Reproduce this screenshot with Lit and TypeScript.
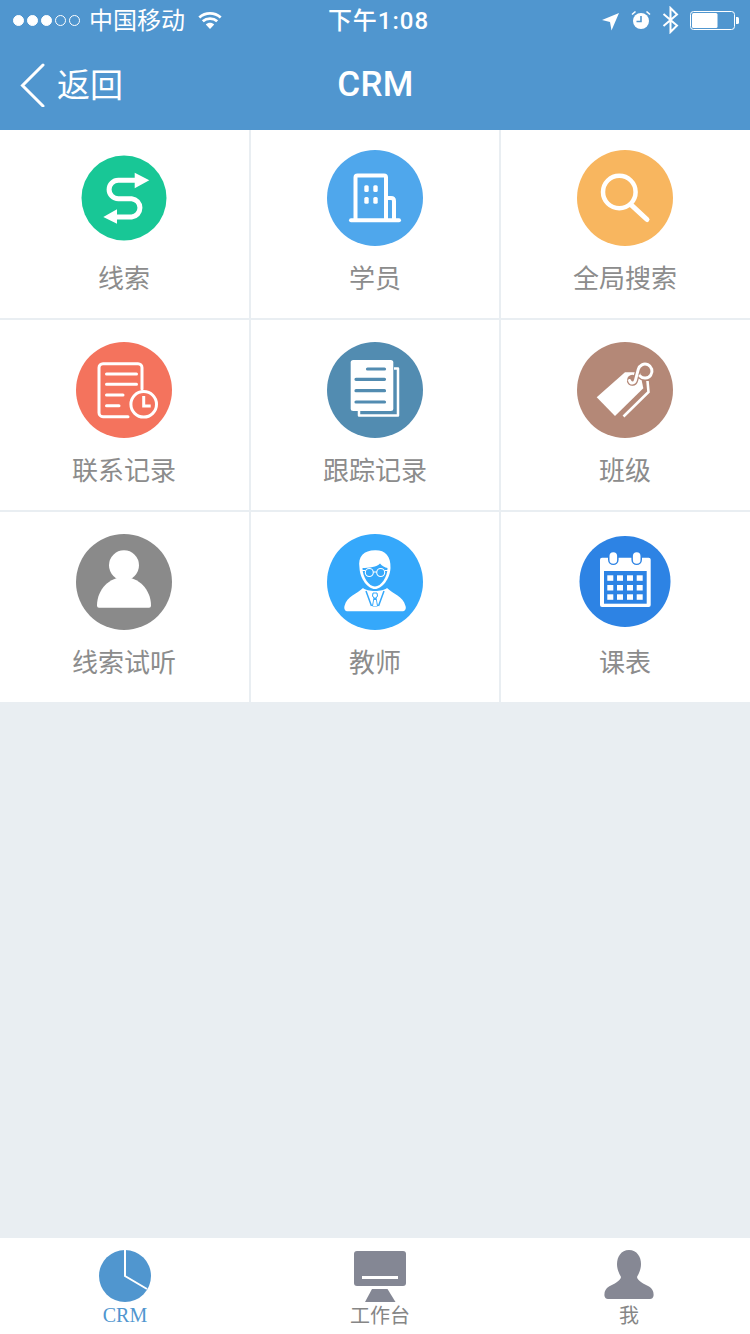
import { LitElement, html, svg, css } from 'lit';
import { customElement } from 'lit/decorators.js';

const CAL_COLS = [30.3, 40, 50, 59.7];
const CAL_ROWS = [41.3, 51, 60.3];

/* Each icon is drawn on the 96x96 box of its coloured disc. */
const ICONS = {
  leads: html`<svg viewBox="0 0 96 96"><circle cx="48" cy="48" r="42.5" fill="#18c796" />
    <path d="M59 30.3H42.3a9.2 9.2 0 0 0 0 18.4h13.4a9.2 9.2 0 0 1 0 18.3H40.7" fill="none" stroke="#fff" stroke-width="5" />
    <path d="M58.7 22.7 73.3 30.3 58.7 38.3zM41 59.3 27.3 67 41 73.7z" fill="#fff" /></svg>`,
  students: html`<svg viewBox="0 0 96 96"><circle cx="48" cy="48" r="48" fill="#4fa7ec" />
    <path d="M28.5 70V27.5q0-2 2-2H57q2 0 2 2V70M59 48h5q3 0 3 3v19" fill="none" stroke="#fff" stroke-width="4" />
    <path d="M24 70.3H72" stroke="#fff" stroke-width="4" stroke-linecap="round" />
    <g fill="#fff"><rect x="37.3" y="35.3" width="4.4" height="6.8" rx="1.5" /><rect x="46.3" y="35.3" width="4.4" height="6.8" rx="1.5" />
      <rect x="37.3" y="47" width="4.4" height="6.8" rx="1.5" /><rect x="46.3" y="47" width="4.4" height="6.8" rx="1.5" /></g></svg>`,
  search: html`<svg viewBox="0 0 96 96"><circle cx="48" cy="48" r="48" fill="#f8b65f" />
    <circle cx="42.3" cy="42" r="16.3" fill="none" stroke="#fff" stroke-width="4.5" />
    <path d="M54.7 55.3 70 69.5" stroke="#fff" stroke-width="5" stroke-linecap="round" /></svg>`,
  contacts: html`<svg viewBox="0 0 96 96"><circle cx="48" cy="48" r="48" fill="#f4735d" />
    <g fill="none" stroke="#fff" stroke-width="3" stroke-linecap="round">
      <path d="M52 74.7H27a4 4 0 0 1-4-4V25.7a4 4 0 0 1 4-4H62a4 4 0 0 1 4 4V47" />
      <path d="M30.5 32H60.5M30.5 42.3H60.5M30.5 53H47M30.5 63.7H43" />
      <circle cx="67.7" cy="62.3" r="12.8" />
      <path d="M67.7 54V64H74.7" stroke-linecap="butt" /></g></svg>`,
  follow: html`<svg viewBox="0 0 96 96"><circle cx="48" cy="48" r="48" fill="#528cb1" />
    <path d="M67 26.5H71V73.5H32V69" fill="none" stroke="#fff" stroke-width="2.5" stroke-linejoin="round" />
    <rect x="23.7" y="18" width="42.6" height="51" rx="2.5" fill="#fff" />
    <path d="M40.5 27H57.5M29 37.3H57.5M29 48.7H57.5M29 60H57.5" stroke="#528cb1" stroke-width="3.2" stroke-linecap="round" /></svg>`,
  classes: html`<svg viewBox="0 0 96 96"><circle cx="48" cy="48" r="48" fill="#b48877" />
    <path d="M19.7 55.3 48 30.3 63 30.3 66.3 46.3 38 74z" fill="#fff" />
    <path d="M46.5 74.5 71.5 50 70.5 39" fill="none" stroke="#fff" stroke-width="2.6" />
    <circle cx="55.3" cy="38" r="5.2" fill="#b48877" />
    <path d="M52.5 38.5c1 3.5 5 3.5 6-.5l2.7-10.500a7 7 0 1 1 1.800 6.500" fill="none" stroke="#b48877" stroke-width="5.500" />
    <path d="M52.5 38.5c1 3.5 5 3.5 6-.5l2.7-10.500a7 7 0 1 1 1.800 6.500" fill="none" stroke="#fff" stroke-width="3" stroke-linecap="round" /></svg>`,
  trials: html`<svg viewBox="0 0 96 96"><circle cx="48" cy="48" r="48" fill="#8a8a8a" />
    <circle cx="48" cy="31.3" r="15" fill="#fff" />
    <path d="M23 73.7H73a2 2 0 0 0 2-2C75 55 62 43 48 43S21 55 21 71.7a2 2 0 0 0 2 2z" fill="#fff" /></svg>`,
  teachers: html`<svg viewBox="0 0 96 96"><circle cx="48" cy="48" r="48" fill="#35a8fb" />
    <path d="M36 54C30 60 20 62 17.5 72 16.8 75 18 77.3 21 77.3H75C78 77.3 79.5 75 78.5 72 76 62 66 60 60 54 56 58 40 58 36 54z" fill="#fff" />
    <path d="M32.5 34C30.5 22 37 16.5 48 16.3 58 16 64 22 63.5 34 63 45 55 55 48 55 41 55 33 45 32.5 34z" fill="#fff" />
    <path d="M35.5 34C42 34 50 33 53 29.5 55 32 58 33.5 60.5 34 60.5 43 54 52.5 48 52.5 42 52.5 35.5 43 35.5 34z" fill="#35a8fb" />
    <g fill="none" stroke="#fff" stroke-width="1.1"><circle cx="42.3" cy="38.5" r="4" /><circle cx="53.7" cy="38.5" r="4" /><path d="M46.3 38H49.7M33 36.5H38.3M57.7 36.5H63" /></g>
    <path d="M39 57 44.5 72M57 57 51.5 72" stroke="#35a8fb" stroke-width="1.5" />
    <path d="M46 59H50L50.5 62 49 64 50.5 72H45.500L47 64 45.500 62z" fill="#35a8fb" stroke="#35a8fb" />
    <path d="M46.5 59.5H49.5L50 62 48 64 46 62zM47 66H49L50 72H46z" fill="#fff" /></svg>`,
  schedule: html`<svg viewBox="0 0 96 96"><circle cx="48" cy="47.5" r="45.5" fill="#2d83e4" />
    <rect x="23" y="23.7" width="50.7" height="49.3" rx="2" fill="#fff" />
    <rect x="27" y="37" width="42.7" height="32.7" fill="#2d83e4" />
    <rect x="31" y="17" width="10.6" height="14" rx="5.3" fill="#2d83e4" />
    <rect x="54.4" y="17" width="10.6" height="14" rx="5.3" fill="#2d83e4" />
    <g fill="#fff"><rect x="32.5" y="18.3" width="7.6" height="11.4" rx="3.8" /><rect x="55.9" y="18.3" width="7.6" height="11.4" rx="3.8" />
      ${CAL_ROWS.map((y) => CAL_COLS.map((x) => svg`<rect x=${x} y=${y} width="6" height="5.5" />`))}</g></svg>`,
};

const ITEMS = [
  { label: '线索', icon: ICONS.leads },
  { label: '学员', icon: ICONS.students },
  { label: '全局搜索', icon: ICONS.search },
  { label: '联系记录', icon: ICONS.contacts },
  { label: '跟踪记录', icon: ICONS.follow },
  { label: '班级', icon: ICONS.classes },
  { label: '线索试听', icon: ICONS.trials },
  { label: '教师', icon: ICONS.teachers },
  { label: '课表', icon: ICONS.schedule },
];

@customElement('app-root')
export class AppRoot extends LitElement {
  static styles = css`
    :host {
      display: flex;
      flex-direction: column;
      height: 1334px;
      background: #e9eef2;
      font-family: 'Noto Sans CJK SC', 'Liberation Sans', sans-serif;
    }

    .top {
      background: #5096cf;
      color: #fff;
      height: 130px;
      flex: none;
    }

    .status {
      display: grid;
      grid-template-columns: 1fr auto 1fr;
      align-items: center;
      height: 40px;
      padding: 0 10px 0 13px;
      font-size: 24px;
    }

    .status-left,
    .status-right {
      display: flex;
      align-items: center;
    }

    .status-right {
      justify-content: flex-end;
    }

    .dots {
      display: flex;
      gap: 3px;
      margin-right: 9px;
    }

    .dot {
      box-sizing: border-box;
      width: 11px;
      height: 11px;
      border-radius: 50%;
      border: 1px solid #fff;
    }

    .dot.on {
      background: #fff;
    }

    .carrier {
      margin-bottom: 4px;
    }

    .wifi {
      width: 26px;
      height: 20px;
      margin: 2px 0 0 12px;
    }

    .time {
      font-family: Roboto, 'Noto Sans CJK SC', sans-serif;
      font-weight: 500;
      letter-spacing: 1px;
      padding-left: 4px;
      margin-bottom: 4px;
    }

    .nav-arrow {
      width: 19px;
      height: 19px;
      margin-top: 2px;
    }

    .alarm {
      width: 20px;
      height: 20px;
      margin-left: 11px;
    }

    .bt {
      width: 17px;
      height: 28px;
      margin-left: 11px;
    }

    .battery {
      width: 50px;
      height: 20px;
      margin: 2px 0 0 11px;
    }

    .nav {
      position: relative;
      display: flex;
      align-items: center;
      height: 90px;
      padding-left: 20px;
    }

    .chevron {
      width: 25px;
      height: 44px;
      margin-top: -1px;
    }

    .back {
      margin: 0 0 4px 12px;
      font-size: 33px;
      line-height: 1;
    }

    .title {
      position: absolute;
      left: 1px;
      right: 0;
      text-align: center;
      font-family: Roboto, sans-serif;
      font-weight: 500;
      font-size: 35px;
      letter-spacing: 0.4px;
      line-height: 1;
      margin-top: -2px;
    }

    .grid {
      display: grid;
      grid-template-columns: 249px 248px 249px;
      grid-template-rows: 188px 190px 190px;
      gap: 2px;
      flex: none;
    }

    .cell {
      display: flex;
      flex-direction: column;
      align-items: center;
      background: #fff;
      padding-top: 22px;
    }

    .cell:not(:nth-child(3n + 2)) {
      padding-right: 1px;
    }

    .cell.first-row {
      padding-top: 20px;
    }

    .cell svg {
      width: 96px;
      height: 96px;
      flex: none;
    }

    .label {
      margin-top: 13px;
      font-size: 26px;
      line-height: 36px;
      color: #8c8c8c;
    }

    .spacer {
      flex: 1;
    }

    .tabs {
      display: grid;
      grid-template-columns: 250px 260px 238px;
      height: 96px;
      flex: none;
      background: #fff;
    }

    .tab {
      display: flex;
      flex-direction: column;
      align-items: center;
      padding-top: 11px;
    }

    .tab svg {
      width: 56px;
      height: 54px;
      flex: none;
    }

    .tab-label {
      font-size: 20px;
      line-height: 24px;
      color: #868686;
    }

    .tab-label.active {
      color: #5096cf;
      font-family: 'Liberation Serif', serif;
    }
  `;

  render() {
    return html`
      <div class="top">
        <div class="status">
          <div class="status-left">
            <div class="dots">
              ${[1, 1, 1, 0, 0].map((on) => html`<span class="dot ${on ? 'on' : ''}"></span>`)}
            </div>
            <span class="carrier">中国移动</span>
            <svg class="wifi" viewBox="0 0 26 20">
              <path d="M13 18 8.8 13.5C11 11.3 15 11.3 17.2 13.5z" fill="#fff" />
              <path d="M5.8 10.3C9.8 6.7 16.2 6.7 20.2 10.3M2.3 6.5C8.5 1 17.5 1 23.7 6.5" fill="none" stroke="#fff" stroke-width="2.8" />
            </svg>
          </div>
          <div class="time">下午1:08</div>
          <div class="status-right">
            <svg class="nav-arrow" viewBox="0 0 19 19"><path d="M1 8 18 1 10.5 18.5 9 10z" fill="#fff" /></svg>
            <svg class="alarm" viewBox="0 0 20 20">
              <circle cx="10" cy="11" r="8" fill="#fff" />
              <path d="M10 6V11.5H5.5" fill="none" stroke="#5096cf" stroke-width="1.6" />
              <path d="M1 4.5 4.5 1.5M19 4.5 15.5 1.5" stroke="#fff" stroke-width="1.6" />
            </svg>
            <svg class="bt" viewBox="0 0 17 28">
              <path d="M1.5 8 15 19.5 8.5 26V2L15 8.5 1.5 20" fill="none" stroke="#fff" stroke-width="2" />
            </svg>
            <svg class="battery" viewBox="0 0 50 20">
              <rect x="0.5" y="0.5" width="44" height="18" rx="3" fill="none" stroke="#fff" />
              <rect x="2" y="2" width="25.5" height="15" rx="1.5" fill="#fff" />
              <path d="M46 6h1.5q1.5 0 1.5 1.5v4q0 1.5-1.5 1.5H46z" fill="#fff" />
            </svg>
          </div>
        </div>
        <div class="nav">
          <svg class="chevron" viewBox="0 0 25 44">
            <path d="M23 2 2.5 22.5 23 43" fill="none" stroke="#fff" stroke-width="3" stroke-linecap="round" />
          </svg>
          <span class="back">返回</span>
          <span class="title">CRM</span>
        </div>
      </div>

      <div class="grid">
        ${ITEMS.map(
          (item, i) => html`
            <div class="cell ${i < 3 ? 'first-row' : ''}">
              ${item.icon}
              <span class="label">${item.label}</span>
            </div>
          `
        )}
      </div>

      <div class="spacer"></div>

      <div class="tabs">
        <div class="tab">
          <svg viewBox="0 0 56 54">
            <circle cx="28" cy="27" r="26" fill="#5096cf" />
            <path d="M28 1V27L50 40" fill="none" stroke="#fff" stroke-width="2" />
          </svg>
          <span class="tab-label active">CRM</span>
        </div>
        <div class="tab">
          <svg viewBox="0 0 56 54">
            <rect x="2" y="2" width="52" height="35" rx="3" fill="#848794" />
            <rect x="10" y="27" width="36" height="3" fill="#fff" />
            <path d="M20 40H35.5L43.5 53H13z" fill="#848794" />
          </svg>
          <span class="tab-label">工作台</span>
        </div>
        <div class="tab">
          <svg viewBox="0 0 56 54">
            <path d="M28 1C36 1 40 8 40 15 40 21 37.5 25 36 28 36.5 32 43 35 48 37.5 51.5 39.5 53 43 52.5 47 52 49 51 50 49 50H7C5 50 4 49 3.5 47 3 43 4.5 39.5 8 37.5 13 35 19.5 32 20 28 18.5 25 16 21 16 15 16 8 20 1 28 1z" fill="#868894" />
          </svg>
          <span class="tab-label">我</span>
        </div>
      </div>
    `;
  }
}
